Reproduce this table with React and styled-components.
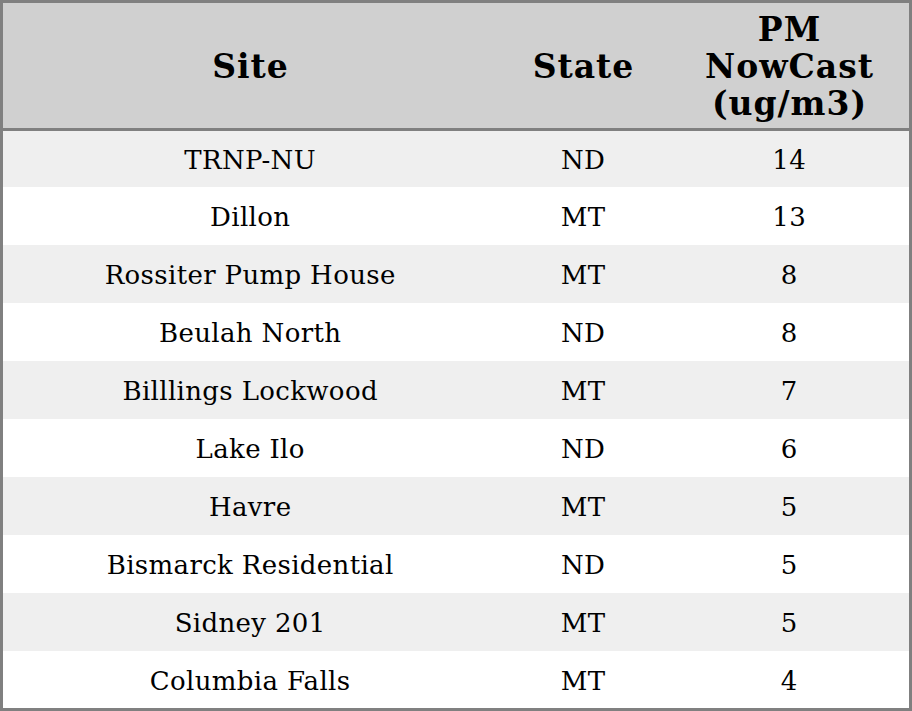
import React from "react";
import styled, { createGlobalStyle } from "styled-components";

const Global = createGlobalStyle`
  html, body { margin: 0; padding: 0; background: #ffffff; }
  body { font-family: "DejaVu Serif", serif; }
`;

const Table = styled.table`
  width: 912px;
  border: 3px solid #808080;
  border-spacing: 0;
  border-collapse: separate;
  table-layout: fixed;
  font-family: "DejaVu Serif", serif;
  color: #000;
`;

const HeadCell = styled.th`
  height: 124px;
  padding: 1px 0 0 1px;
  background: #d0d0d0;
  border-bottom: 3px solid #808080;
  font-size: 33px;
  line-height: 37px;
  font-weight: bold;
  letter-spacing: 1px;
  text-align: center;
  vertical-align: middle;
`;

const Row = styled.tr`
  height: 58px;
  background: ${(p) => (p.$odd ? "#efefef" : "#ffffff")};
  &:first-child { height: 56px; }
  &:last-child { height: 57px; }
`;

const Cell = styled.td`
  padding: 2px 0 0 0.35px;
  font-size: 26px;
  letter-spacing: 0.35px;
  text-align: center;
  vertical-align: middle;
`;

const data = [
  ["TRNP-NU", "ND", 14],
  ["Dillon", "MT", 13],
  ["Rossiter Pump House", "MT", 8],
  ["Beulah North", "ND", 8],
  ["Billlings Lockwood", "MT", 7],
  ["Lake Ilo", "ND", 6],
  ["Havre", "MT", 5],
  ["Bismarck Residential", "ND", 5],
  ["Sidney 201", "MT", 5],
  ["Columbia Falls", "MT", 4],
];

export default function App() {
  return (
    <>
      <Global />
      <Table>
        <colgroup>
          <col style={{ width: 494 }} />
          <col style={{ width: 172 }} />
          <col style={{ width: 240 }} />
        </colgroup>
        <thead>
          <tr>
            <HeadCell>Site</HeadCell>
            <HeadCell>State</HeadCell>
            <HeadCell>
              PM
              <br />
              NowCast
              <br />
              (ug/m3)
            </HeadCell>
          </tr>
        </thead>
        <tbody>
          {data.map(([site, state, val], i) => (
            <Row key={site} $odd={i % 2 === 0}>
              <Cell>{site}</Cell>
              <Cell>{state}</Cell>
              <Cell>{val}</Cell>
            </Row>
          ))}
        </tbody>
      </Table>
    </>
  );
}
